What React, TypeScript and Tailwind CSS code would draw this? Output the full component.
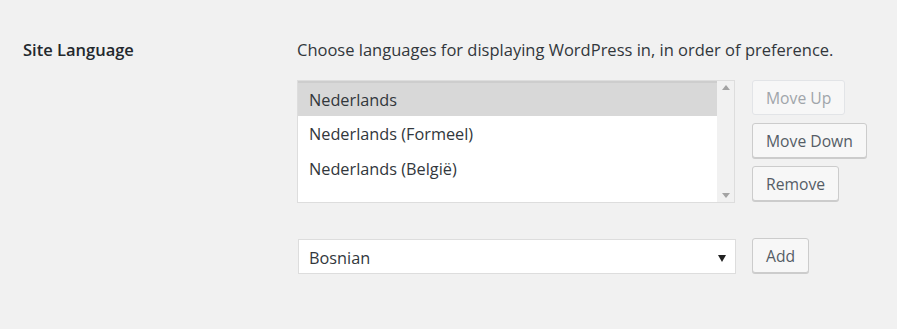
import React from "react";

const font = { fontFamily: '"Open Sans", "Noto Sans", sans-serif' };

function Btn({ children, disabled }: { children: React.ReactNode; disabled?: boolean }) {
  return (
    <button
      className={
        "h-[35px] px-[13px] pt-[2px] rounded-[3px] border text-[15.7px] leading-none whitespace-nowrap " +
        (disabled
          ? "border-[#e2e4e7] bg-[#f7f7f7] text-[#a0a5aa]"
          : "border-[#cccccc] bg-[#f7f7f7] text-[#555d66] shadow-[0_1px_0_#cccccc]")
      }
    >
      {children}
    </button>
  );
}

export default function App() {
  const items = ["Nederlands", "Nederlands (Formeel)", "Nederlands (België)"];
  return (
    <div className="w-[897px] h-[329px] bg-[#f1f1f1] text-[#23282d] flex pl-[23px] pt-[36px]" style={font}>
      <div className="w-[274px] text-[16.5px] font-semibold leading-[28px]">Site Language</div>
      <div className="flex flex-col">
        <p className="text-[16.5px] leading-[28px] text-[#32373c]">
          Choose languages for displaying WordPress in, in order of preference.
        </p>
        <div className="flex mt-[16px]">
          <div className="w-[438px] h-[123px] border border-[#dddddd] bg-white flex">
            <div className="flex-1 flex flex-col">
              {items.map((t, i) => (
                <div
                  key={t}
                  className={
                    "h-[35px] flex items-center pl-[11px] pt-[2px] text-[16.3px] text-[#32373c] " +
                    (i === 0 ? "bg-[#d8d8d8] border-t-2 border-[#cdcdcd]" : "")
                  }
                >
                  {t}
                </div>
              ))}
            </div>
            <div className="w-[17px] bg-[#f1f1f1] flex flex-col justify-between items-center py-[4px]">
              <svg width="8" height="5" viewBox="0 0 8 5"><path d="M0 5L4 0L8 5Z" fill="#a3a3a3" /></svg>
              <svg width="8" height="5" viewBox="0 0 8 5"><path d="M0 0L4 5L8 0Z" fill="#a3a3a3" /></svg>
            </div>
          </div>
          <div className="flex flex-col items-start gap-[8px] ml-[17px]">
            <Btn disabled>Move Up</Btn>
            <Btn>Move Down</Btn>
            <Btn>Remove</Btn>
          </div>
        </div>
        <div className="flex items-start mt-[36px]">
          <div className="w-[438px] h-[35px] ml-[1px] border border-[#dddddd] bg-white flex items-center justify-between pl-[10px] pr-[9px] pt-[3px] text-[16.3px] text-[#32373c]">
            <span>Bosnian</span>
            <svg width="8" height="7" viewBox="0 0 8 7"><path d="M0 0L4 7L8 0Z" fill="#222" /></svg>
          </div>
          <div className="ml-[16px] -mt-[1px]">
            <Btn>Add</Btn>
          </div>
        </div>
      </div>
    </div>
  );
}
